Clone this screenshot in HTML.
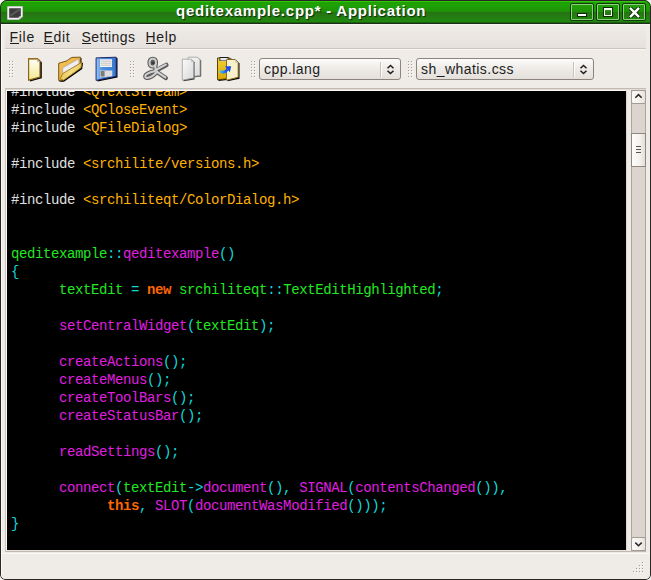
<!DOCTYPE html>
<html><head><meta charset="utf-8">
<style>
*{margin:0;padding:0;box-sizing:border-box}
html,body{width:651px;height:580px;overflow:hidden;background:#f2f2f2}
body{position:relative;font-family:"Liberation Sans",sans-serif}
.a{position:absolute}
#win{left:0;top:0;width:651px;height:580px;background:#efebe7;border-radius:7px 7px 5px 5px;overflow:hidden}
#title{left:0;top:0;width:651px;height:24px;background:linear-gradient(#1c2a1a 0px,#1c2a1a 1px,#33cf0c 1px,#2bbf08 2px,#1fa005 2px,#1fa005 6px,#1d9006 12px,#25700f 12.5px,#267414 13.5px,#237d12 17px,#1f8a0c 22px,#1d6010 22px,#1d6010 23px,#1b3018 23px)}
#ttl{left:176px;top:2px;height:20px;color:#fff;font-weight:bold;font-size:15px;letter-spacing:0.75px;white-space:nowrap;text-shadow:1px 1px 1px #0a2a06}
.tb{top:3px;width:24px;height:18px;border:1px solid #103a08;border-radius:2px}
.tb>i{position:absolute;left:0;top:0;right:0;bottom:0;border:1px solid #8ccf7c;border-radius:1px;background:linear-gradient(#22a008,#1f9208 50%,#257412 52%,#1f880c)}
.frl{width:1px;background:#fbfaf9}
#menubar{left:5px;top:25px;width:641px;height:24px;background:linear-gradient(#efebe7,#e6e1dc);border-bottom:1px solid #cfc6bd}
.mi{top:4px;font-size:14px;letter-spacing:0.7px;color:#1c1c1c;white-space:nowrap}
.mi u{text-decoration:none;position:relative}
.mi u::after{content:"";position:absolute;left:0;right:0;top:14px;height:1px;background:#1c1c1c}
.combo{top:58px;height:22px;border:1px solid #8c857e;border-radius:3px;background:linear-gradient(#fdfcfb,#f0edea 40%,#e4dfda)}
.ctext{left:4px;top:1.5px;font-size:14px;letter-spacing:0.45px;color:#1c1c1c;white-space:nowrap}
.csep{top:3px;width:2px;height:15px;border-left:1px solid #c9c1b9;border-right:1px solid #fdfcfb}
#black{left:7px;top:91px;width:619px;height:459px;background:#000;overflow:hidden}
pre{position:absolute;left:4px;top:-8px;font-family:"Liberation Mono",monospace;font-size:14px;letter-spacing:-0.4px;line-height:18px;color:#e0e0e0}
.s{color:#ffb000}.g{color:#22e822}.c{color:#10d8d8}.m{color:#e01ee0}.k{color:#ff6600;font-weight:bold}
#sb{left:631px;top:90px;width:15px;height:461px}
.sbtn{left:0;width:15px;height:14px;border:1px solid #a59c93;border-radius:2px;background:linear-gradient(90deg,#fbfaf9,#f3f0ed 60%,#e6e2de)}
.slider{left:0;width:15px;height:34px;border:1px solid #8f867d;background:linear-gradient(90deg,#fdfcfb,#f4f2ef 60%,#e2ded9)}
.slider i{position:absolute;left:4px;width:5px;height:1px;background:#5a5550}
</style></head><body>
<div id="win" class="a">
 <div id="title" class="a">
  <svg class="a" style="left:6px;top:5px" width="18" height="16" viewBox="0 0 18 16"><path d="M1.5 1.5 H16.5 V12 L13 14.5 H1.5 Z" fill="#3c3c3c" stroke="#b8b8b8" stroke-width="1"/><path d="M2.5 2.5 H15.5 V11.5 L12.5 13.5 H2.5 Z" fill="none" stroke="#f0f0f0" stroke-width="1.4"/><path d="M4 11 L14 4" stroke="#5a5a5a" stroke-width="2"/><path d="M12.3 13.6 L15.6 11.4 L13.2 11.2 Z" fill="#d0d0d0"/></svg>
  <div id="ttl" class="a">qeditexample.cpp* - Application</div>
  <div class="a tb" style="left:570px"><i></i><div class="a" style="left:6px;top:10px;width:10px;height:4px;background:#fff;border:1px solid #0a2a06;box-sizing:content-box;left:6px;top:9px;width:8px;height:2px"></div></div>
  <div class="a tb" style="left:596px"><i></i><div class="a" style="left:6px;top:3px;width:10px;height:10px;border:1px solid #0a2a06"><div class="a" style="left:0;top:0;width:8px;height:8px;border:1px solid #fff;border-top-width:2px"></div></div></div>
  <div class="a tb" style="left:622px"><i></i><svg class="a" style="left:6px;top:3px" width="11" height="11" viewBox="0 0 11 11"><path d="M1.5 1.5 L9.5 9.5 M9.5 1.5 L1.5 9.5" stroke="#0a2a06" stroke-width="4.2" stroke-linecap="round"/><path d="M1.8 1.8 L9.2 9.2 M9.2 1.8 L1.8 9.2" stroke="#fff" stroke-width="2.4" stroke-linecap="square"/></svg></div>
 </div>
 <div class="a frl" style="left:1px;top:24px;height:555px"></div>
 <div class="a" style="left:1px;top:24px;width:649px;height:1px;background:#f8f6f4"></div>
 <div class="a" style="left:5px;top:49px;width:641px;height:1px;background:#f8f6f3"></div>
 <div id="menubar" class="a">
  <div class="a mi" style="left:4.5px"><u>F</u>ile</div>
  <div class="a mi" style="left:38.5px"><u>E</u>dit</div>
  <div class="a mi" style="left:76.5px;letter-spacing:0.4px"><u>S</u>ettings</div>
  <div class="a mi" style="left:140.5px"><u>H</u>elp</div>
 </div>
 <!-- toolbar -->
<svg class="a" style="left:0;top:0" width="430" height="90" viewBox="0 0 430 90">
 <defs>
  <linearGradient id="gNew" x1="0" y1="0" x2="0" y2="1"><stop offset="0" stop-color="#fffff8"/><stop offset="1" stop-color="#f4e890"/></linearGradient>
  <linearGradient id="gFoldBack" x1="0" y1="0" x2="1" y2="1"><stop offset="0" stop-color="#f8c860"/><stop offset="1" stop-color="#d8a030"/></linearGradient>
  <linearGradient id="gFront" x1="0" y1="0" x2="1" y2="0"><stop offset="0" stop-color="#e8c860"/><stop offset="0.5" stop-color="#f4dc80"/><stop offset="1" stop-color="#e8cc68"/></linearGradient>
  <linearGradient id="gBlue" x1="0" y1="0" x2="1" y2="0"><stop offset="0" stop-color="#9ccaf8"/><stop offset="0.3" stop-color="#4a8ee0"/><stop offset="1" stop-color="#3a78d0"/></linearGradient>
  <linearGradient id="gPage" x1="0" y1="0" x2="1" y2="1"><stop offset="0" stop-color="#fafafa"/><stop offset="1" stop-color="#d8d8d8"/></linearGradient>
  <linearGradient id="gClip" x1="0" y1="0" x2="0" y2="1"><stop offset="0" stop-color="#f0d040"/><stop offset="1" stop-color="#d8a800"/></linearGradient>
  <linearGradient id="gArrow" x1="0" y1="0" x2="1" y2="0"><stop offset="0" stop-color="#40c8f0"/><stop offset="1" stop-color="#1040e8"/></linearGradient>
 </defs>
 <!-- grips -->
 <g fill="#a89e94">
  <path d="M9 61h1v1h-1zM12 61h1v1h-1zM9 64h1v1h-1zM12 64h1v1h-1zM9 67h1v1h-1zM12 67h1v1h-1zM9 70h1v1h-1zM12 70h1v1h-1zM9 73h1v1h-1zM12 73h1v1h-1zM9 76h1v1h-1zM12 76h1v1h-1z"/>
  <path transform="translate(121 0)" d="M9 61h1v1h-1zM12 61h1v1h-1zM9 64h1v1h-1zM12 64h1v1h-1zM9 67h1v1h-1zM12 67h1v1h-1zM9 70h1v1h-1zM12 70h1v1h-1zM9 73h1v1h-1zM12 73h1v1h-1zM9 76h1v1h-1zM12 76h1v1h-1z"/>
  <path transform="translate(242 0)" d="M9 61h1v1h-1zM12 61h1v1h-1zM9 64h1v1h-1zM12 64h1v1h-1zM9 67h1v1h-1zM12 67h1v1h-1zM9 70h1v1h-1zM12 70h1v1h-1zM9 73h1v1h-1zM12 73h1v1h-1zM9 76h1v1h-1zM12 76h1v1h-1z"/>
  <path transform="translate(399 0)" d="M9 61h1v1h-1zM12 61h1v1h-1zM9 64h1v1h-1zM12 64h1v1h-1zM9 67h1v1h-1zM12 67h1v1h-1zM9 70h1v1h-1zM12 70h1v1h-1zM9 73h1v1h-1zM12 73h1v1h-1zM9 76h1v1h-1zM12 76h1v1h-1z"/>
 </g>
 <g fill="#fbfaf8">
  <path d="M10 62h1v1h-1zM13 62h1v1h-1zM10 65h1v1h-1zM13 65h1v1h-1zM10 68h1v1h-1zM13 68h1v1h-1zM10 71h1v1h-1zM13 71h1v1h-1zM10 74h1v1h-1zM13 74h1v1h-1zM10 77h1v1h-1zM13 77h1v1h-1z"/>
  <path transform="translate(121 0)" d="M10 62h1v1h-1zM13 62h1v1h-1zM10 65h1v1h-1zM13 65h1v1h-1zM10 68h1v1h-1zM13 68h1v1h-1zM10 71h1v1h-1zM13 71h1v1h-1zM10 74h1v1h-1zM13 74h1v1h-1zM10 77h1v1h-1zM13 77h1v1h-1z"/>
  <path transform="translate(242 0)" d="M10 62h1v1h-1zM13 62h1v1h-1zM10 65h1v1h-1zM13 65h1v1h-1zM10 68h1v1h-1zM13 68h1v1h-1zM10 71h1v1h-1zM13 71h1v1h-1zM10 74h1v1h-1zM13 74h1v1h-1zM10 77h1v1h-1zM13 77h1v1h-1z"/>
  <path transform="translate(399 0)" d="M10 62h1v1h-1zM13 62h1v1h-1zM10 65h1v1h-1zM13 65h1v1h-1zM10 68h1v1h-1zM13 68h1v1h-1zM10 71h1v1h-1zM13 71h1v1h-1zM10 74h1v1h-1zM13 74h1v1h-1zM10 77h1v1h-1zM13 77h1v1h-1z"/>
 </g>
 <!-- New -->
 <path d="M30 59.5 L39 59.5 L41.8 62.3 L41.8 78.2 L30 81.5 Z" fill="#000"/>
 <path d="M28.6 58.6 L37.3 58.6 L40 61.3 L40 77 L28.6 80.2 Z" fill="url(#gNew)" stroke="#8c6418" stroke-width="1.2"/>
 <path d="M28.6 59.2 H37" stroke="#b08838" stroke-width="1"/>
 <path d="M36.8 59.3 L36.8 62 L39.6 62 Z" fill="#c4c4bc"/>
 <!-- Open folder -->
 <path d="M59.5 64 L68 61.5 L72.5 58.5 L81.5 58 L81.5 62.5 L83 63 L82.2 69 L64 81.8 L59.5 81.8 Z" fill="#000"/>
 <path d="M58.7 63.3 L66.9 60.8 L68.6 59.4 L71.9 57.4 L80.4 57.2 L80.4 63 L61.5 80.5 L58.7 80.5 Z" fill="url(#gFoldBack)" stroke="#7a5410" stroke-width="1"/>
 <path d="M62.6 74.5 L62.8 67.8 L78.5 59 L79.2 64.5 Z" fill="#eeeef4" stroke="#a09890" stroke-width="0.5"/>
 <path d="M60.2 79 L62.9 73.4 L81.8 62.3 L81 67.8 L63.5 80.3 Z" fill="url(#gFront)" stroke="#a07818" stroke-width="0.9"/>
 <!-- Save -->
 <path d="M97.5 58.5 L117.5 58 L117.5 77.5 L97.5 81.5 Z" fill="#000"/>
 <path d="M96.1 57.9 L116.2 57.2 L116.2 76.3 L96.1 80.4 Z" fill="url(#gBlue)" stroke="#202868" stroke-width="1"/>
 <path d="M100 59.2 H112 V67 H100 Z" fill="#f4f4f4"/>
 <path d="M100.5 61.2 H111.5 M100.5 63.2 H111.5 M100.5 65.2 H111.5" stroke="#b8b8b8" stroke-width="0.8"/>
 <path d="M100 70.5 H112.3 V76.2 L100 77.4 Z" fill="#dcdcdc"/>
 <path d="M100.6 71 H104.6 V76.6 H100.6 Z" fill="#7a7a7a"/>
 <!-- Scissors -->
 <g fill="none" stroke-linecap="round" stroke-linejoin="round">
  <path d="M156 70.5 L166.3 65" stroke="#5c5c5c" stroke-width="4.6"/>
  <path d="M155.5 71 L165.8 78" stroke="#5c5c5c" stroke-width="4.4"/>
  <path d="M149.5 62.8 Q149.5 58.8 152.8 58.8 Q156 58.8 156 62.8 Q156 66.5 152.8 66.5 Q149.5 66.5 149.5 62.8 Z" stroke="#5c5c5c" stroke-width="4.2"/>
  <path d="M155 65 L155.8 70" stroke="#5c5c5c" stroke-width="4.4"/>
  <path d="M156.5 71 Q150 71.5 145.8 74.8 Q144.3 77.3 146.8 78 Q151.5 77.8 156.5 72.5" stroke="#5c5c5c" stroke-width="4.2"/>
  <path d="M155.6 70 L165.8 64.6" stroke="#cfcfcf" stroke-width="2.2"/>
  <path d="M155.2 70.6 L165.3 77.4" stroke="#d2d2d2" stroke-width="2.2"/>
  <path d="M149.5 62.8 Q149.5 58.8 152.8 58.8 Q156 58.8 156 62.8 Q156 66.5 152.8 66.5 Q149.5 66.5 149.5 62.8 Z" stroke="#cacaca" stroke-width="2"/>
  <path d="M155 65 L155.8 70" stroke="#d0d0d0" stroke-width="2"/>
  <path d="M156.5 71 Q150 71.5 145.8 74.8 Q144.3 77.3 146.8 78 Q151.5 77.8 156.5 72.5" stroke="#cdcdcd" stroke-width="2"/>
 </g>
 <path d="M151.3 61.2 h3 v3.2 h-3z" fill="#3a3a3a"/>
 <!-- Copy -->
 <path d="M189.5 58 L198.5 58 L201.2 60.5 L201.2 76.5 L189.5 78 Z" fill="#555"/>
 <path d="M188.2 57.2 L197.5 57.2 L200 59.8 L200 75.5 L188.2 77 Z" fill="url(#gPage)" stroke="#a0a0a0" stroke-width="0.8"/>
 <path d="M183.5 60 L192.5 60 L194.5 62.2 L194.5 79.5 L183.5 81.2 Z" fill="#3a3a3a"/>
 <path d="M182.3 59.2 L191.5 59.2 L193.7 61.5 L193.7 78 L182.3 80.2 Z" fill="url(#gPage)" stroke="#9a9a9a" stroke-width="0.8"/>
 <path d="M191 59.5 L191 62 L193.5 62 Z" fill="#c0c0c0"/>
 <!-- Paste -->
 <path d="M218.5 58.5 L231.5 58.5 L231.5 79.5 L218.5 81 Z" fill="#000"/>
 <path d="M217.5 58 L229.8 58 L229.8 78.5 L217.5 79.8 Z" fill="url(#gClip)" stroke="#5a4400" stroke-width="1"/>
 <path d="M219.5 57 H228.5 V61 H219.5 Z" fill="#1a1a1a"/>
 <path d="M220.3 58 H227.7 V60.5 H220.3 Z" fill="#e8e8e8"/>
 <path d="M227.5 60.5 L236.5 60.5 L239.5 63.5 L239.5 78.8 L227.5 81.3 Z" fill="#000"/>
 <path d="M226.5 59.5 L235 59.5 L238.2 62.5 L238.2 77.3 L226.5 80.2 Z" fill="#f7f0c8" stroke="#8a6a28" stroke-width="1"/>
 <path d="M235 59.8 L235 62.8 L238 62.8 Z" fill="#d0ccc0"/>
 <path d="M220 71 Q224 74 227.5 69.5" fill="none" stroke="url(#gArrow)" stroke-width="2.8"/>
 <path d="M225 66.3 L231.2 66.3 L229.8 72.3 Z" fill="#1a48e8"/>
</svg>

 <div class="a combo" style="left:259px;width:142px">
  <div class="a ctext">cpp.lang</div>
  <div class="a csep" style="left:120px"></div><svg class="a" style="left:126px;top:5px" width="9" height="11" viewBox="0 0 9 11"><path d="M1.5 4.3 L4.5 1.5 L7.5 4.3 M1.5 6.7 L4.5 9.5 L7.5 6.7" fill="none" stroke="#1e1e1e" stroke-width="1.5"/></svg>
 </div>
 <div class="a combo" style="left:416px;width:178px">
  <div class="a ctext">sh_whatis.css</div>
  <div class="a csep" style="left:156px"></div><svg class="a" style="left:162px;top:5px" width="9" height="11" viewBox="0 0 9 11"><path d="M1.5 4.3 L4.5 1.5 L7.5 4.3 M1.5 6.7 L4.5 9.5 L7.5 6.7" fill="none" stroke="#1e1e1e" stroke-width="1.5"/></svg>
 </div>
 <div class="a" style="left:5px;top:88px;width:641px;height:464px;border-top:1px solid #c4bbb2;border-left:1px solid #cdc5bd;border-bottom:1px solid #c0b8b0"></div>
 <div class="a" style="left:6px;top:89px;width:640px;height:1px;background:#e0dad4"></div>
 <div class="a" style="left:6px;top:90px;width:621px;height:461px;border-top:1px solid #fbfaf9;border-left:1px solid #fbfaf9;border-bottom:1px solid #e8e4e0;border-right:1px solid #dcd6d0"></div>
 <div class="a" style="left:1px;top:553px;width:649px;height:1px;background:#faf9f7"></div>
 <div id="black" class="a"><pre><span>#include <span class="s">&lt;QTextStream&gt;</span>
#include <span class="s">&lt;QCloseEvent&gt;</span>
#include <span class="s">&lt;QFileDialog&gt;</span>

#include <span class="s">&lt;srchilite/versions.h&gt;</span>

#include <span class="s">&lt;srchiliteqt/ColorDialog.h&gt;</span>


<span class="g">qeditexample</span><span class="c">::</span><span class="m">qeditexample</span><span class="c">()</span>
<span class="c">{</span>
      <span class="g">textEdit</span> <span class="c">=</span> <span class="k">new</span> <span class="g">srchiliteqt</span><span class="c">::</span><span class="g">TextEditHighlighted</span><span class="c">;</span>

      <span class="m">setCentralWidget</span><span class="c">(</span><span class="g">textEdit</span><span class="c">);</span>

      <span class="m">createActions</span><span class="c">();</span>
      <span class="m">createMenus</span><span class="c">();</span>
      <span class="m">createToolBars</span><span class="c">();</span>
      <span class="m">createStatusBar</span><span class="c">();</span>

      <span class="m">readSettings</span><span class="c">();</span>

      <span class="m">connect</span><span class="c">(</span><span class="g">textEdit</span><span class="c">-&gt;</span><span class="m">document</span><span class="c">(),</span> <span class="m">SIGNAL</span><span class="c">(</span><span class="m">contentsChanged</span><span class="c">()),</span>
            <span class="k">this</span><span class="c">,</span> <span class="m">SLOT</span><span class="c">(</span><span class="m">documentWasModified</span><span class="c">()));</span>
<span class="c">}</span>
</span></pre></div>
 <div id="sb" class="a">
  <div class="a" style="left:0;top:0;width:15px;height:461px;background:#dcd5cf;border-left:1px solid #aea59c;border-right:1px solid #aea59c"></div>
  <div class="a sbtn" style="top:0"><svg class="a" style="left:2px;top:2px" width="9" height="7" viewBox="0 0 9 7"><path d="M1.3 4.8 L4.5 1.6 L7.7 4.8" fill="none" stroke="#2a2826" stroke-width="1.5"/></svg></div>
  <div class="a slider" style="top:43px"><i style="top:12px"></i><i style="top:15px"></i><i style="top:18px"></i></div>
  <div class="a sbtn" style="top:447px"><svg class="a" style="left:2px;top:3px" width="9" height="7" viewBox="0 0 9 7"><path d="M1.3 1.6 L4.5 4.8 L7.7 1.6" fill="none" stroke="#2a2826" stroke-width="1.5"/></svg></div>
 </div>
 <svg class="a" style="left:630px;top:559px" width="16" height="16" viewBox="630 559 16 16">
  <g fill="#fbfaf8"><path d="M643 563h1v1h-1zM640 566h1v1h-1zM643 566h1v1h-1zM637 569h1v1h-1zM640 569h1v1h-1zM643 569h1v1h-1zM634 572h1v1h-1zM637 572h1v1h-1zM640 572h1v1h-1zM643 572h1v1h-1z"/></g>
  <g fill="#a39a90"><path d="M642 562h1v1h-1zM639 565h1v1h-1zM642 565h1v1h-1zM636 568h1v1h-1zM639 568h1v1h-1zM642 568h1v1h-1zM633 571h1v1h-1zM636 571h1v1h-1zM639 571h1v1h-1zM642 571h1v1h-1z"/></g>
 </svg>
 <div class="a" style="left:0;top:0;width:651px;height:580px;border:1px solid #2a2724;border-radius:7px 7px 5px 5px"></div>
</div>
</body></html>
